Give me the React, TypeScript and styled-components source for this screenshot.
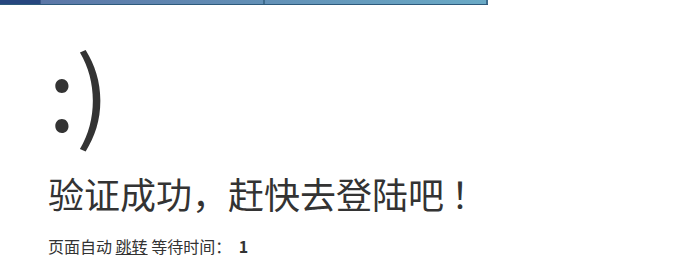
import styled, { createGlobalStyle } from "styled-components";

const Global = createGlobalStyle`
  html, body { margin: 0; padding: 0; background: #fff; }
  body {
    font-family: "Noto Sans CJK SC", "Noto Sans", sans-serif;
    color: #333;
    font-size: 16px;
  }
`;

const TopStrip = styled.div`
  display: flex;
  width: 488px;
  height: 4px;
  border-bottom: 1px solid #2d5a7c;
  background: linear-gradient(90deg, #5a72a4 0%, #6aaac6 100%);
`;

const StripCap = styled.div`
  width: 40px;
  background: #26467f;
  border-right: 1px solid #3d5a8a;
`;

const StripCell = styled.div`
  flex: 1;
  border-right: 2px solid #3f6c8e;
`;

const Message = styled.div`
  padding: 24px 48px;
`;

const Face = styled.h1`
  font-family: "Noto Sans CJK SC", sans-serif;
  font-size: 100px;
  font-weight: normal;
  line-height: 120px;
  margin: 0 0 12px;
`;

const Success = styled.p`
  margin: 0;
  font-size: 36px;
  line-height: 1.8em;
  font-weight: normal;
`;

const Bang = styled.span`
  margin-left: 7px;
`;

const Jump = styled.p`
  margin: 0;
  padding-top: 8px;
  font-size: 16px;
`;

const JumpLink = styled.a`
  color: #333;
  text-decoration: underline;
`;

const Wait = styled.b`
  margin-left: 4px;
`;

export default function App() {
  return (
    <>
      <Global />
      <TopStrip>
        <StripCap />
        <StripCell />
        <StripCell />
      </TopStrip>
      <Message>
        <Face>:)</Face>
        <Success>
          验证成功，赶快去登陆吧<Bang>！</Bang>
        </Success>
        <Jump>
          页面自动 <JumpLink href="#">跳转</JumpLink> 等待时间： <Wait>1</Wait>
        </Jump>
      </Message>
    </>
  );
}
